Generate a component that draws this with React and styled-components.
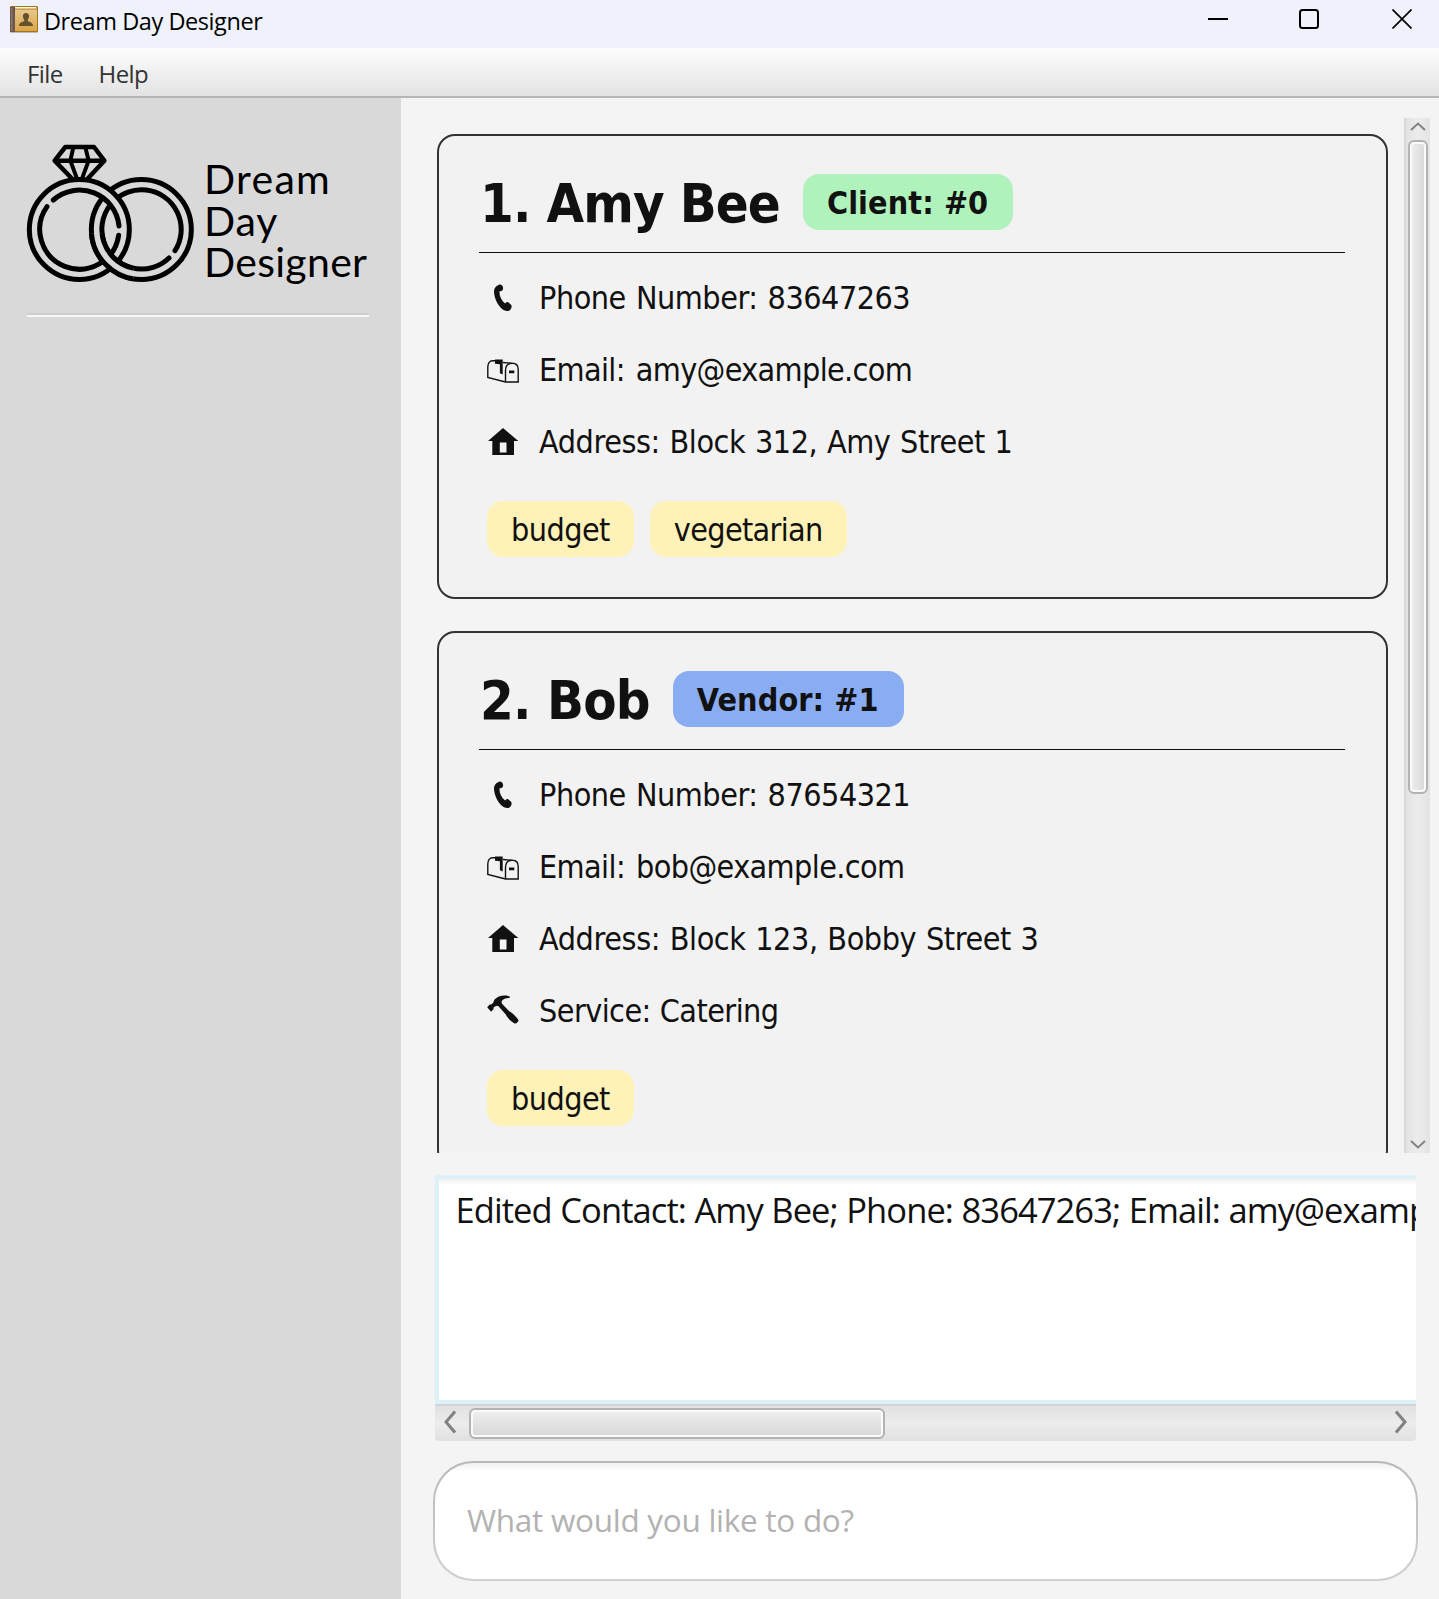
import React from "react";
import styled, { createGlobalStyle, css } from "styled-components";

const SEGOE = `"Segoe UI", "Open Sans", "Noto Sans", sans-serif`;
const TAHOMA = `Tahoma, "DejaVu Sans Condensed", "DejaVu Sans", sans-serif`;

const GlobalStyle = createGlobalStyle`
  *, *::before, *::after { box-sizing: border-box; }
  html, body { margin: 0; padding: 0; background: #f4f4f4; }
  svg { display: block; }
`;

const Window = styled.div`
  display: flex;
  flex-direction: column;
  width: 1439px;
  height: 1599px;
  overflow: hidden;
  background: #f4f4f4;
  font-family: ${SEGOE};
  color: #111;
`;

/* Title bar and menu */

const TitleBar = styled.header`
  display: flex;
  align-items: flex-start;
  height: 48px;
  flex: none;
  padding: 5px 27px 0 10px;
  background: #eff2fa;
`;

const WindowTitle = styled.div`
  margin: -4px 0 0 6px;
  font-size: 23.5px;
  line-height: 40px;
  letter-spacing: -0.43px;
  color: #000;
`;

const WindowControls = styled.div`
  display: grid;
  grid-template-columns: 91px 93px 20px;
  margin-left: auto;
  padding-top: 4px;
`;

const MenuBar = styled.nav`
  display: flex;
  flex: none;
  gap: 36px;
  height: 50px;
  padding: 1px 27px 0;
  border-bottom: 2px solid #b5b5b5;
  background: linear-gradient(#fdfdfd, #e3e3e3);
`;

const MenuItem = styled.span`
  font-size: 24px;
  line-height: 49px;
  letter-spacing: -0.6px;
  color: #333;
`;

/* Body */

const Body = styled.div`
  display: flex;
  flex: 1;
  min-height: 0;
`;

const Sidebar = styled.aside`
  width: 401px;
  flex: none;
  padding: 46px 30px 0 26px;
  background: #d9d9d9;
`;

const Brand = styled.div`
  display: flex;
  gap: 9px;
  height: 139px;
`;

const BrandName = styled.div`
  display: flex;
  flex-direction: column;
  padding-top: 14px;
  font: 400 41px/41.6px Lato, sans-serif;
  color: #000;
`;

const BrandWord = styled.span`
  letter-spacing: ${(p) => p.$spacing || 0}px;
`;

const SidebarRule = styled.div`
  height: 4px;
  width: 342px;
  margin: 30px 0 0 1px;
  border-top: 2px solid #cecece;
  background: #f8f8f8;
`;

const Main = styled.main`
  display: flex;
  flex-direction: column;
  flex: 1;
  min-width: 0;
  padding-top: 20px;
`;

const ListPanel = styled.section`
  display: flex;
  justify-content: space-between;
  flex: none;
  height: 1035px;
  padding: 0 9px 0 36px;
  overflow: hidden;
`;

const CardList = styled.div`
  display: flex;
  flex-direction: column;
  gap: 32px;
  width: 951px;
  padding-top: 16px;
`;

const Card = styled.article`
  flex: none;
  padding: 38px 41px 40px 40px;
  border: 2px solid #333;
  border-radius: 18px;
  background: #f2f2f2;
  font-family: ${TAHOMA};
`;

const CardHeader = styled.div`
  display: flex;
  align-items: flex-start;
  gap: 23px;
  height: 79px;
  border-bottom: 1px solid #111;
`;

const Name = styled.h2`
  margin: 0;
  padding: 2px 0 0 1px;
  font-size: 54px;
  font-weight: 700;
  line-height: 56px;
  letter-spacing: ${(p) => p.$spacing}px;
  white-space: nowrap;
`;

const chip = css`
  height: 56px;
  padding: 2px 24px 0;
  border-radius: 16px;
  font-size: 32px;
  line-height: 54px;
  white-space: nowrap;
`;

const Role = styled.span`
  ${chip}
  padding-right: 25px;
  font-weight: 700;
  letter-spacing: 0.1px;
  background: ${(p) => (p.$kind === "Vendor" ? "#8aacf2" : "#b0f2bb")};
`;

const Details = styled.div`
  display: flex;
  flex-direction: column;
  gap: 36px;
  padding: 27px 0 0 8px;
`;

const Detail = styled.div`
  display: flex;
  align-items: center;
  gap: 20px;
  height: 36px;
  font-size: 32px;
  line-height: 36px;
  letter-spacing: ${(p) => p.$spacing}px;
  word-spacing: ${(p) => p.$gap}px;
  white-space: nowrap;
`;

const Tags = styled.div`
  display: flex;
  gap: 16px;
  padding: 41px 0 0 8px;
`;

const Tag = styled.span`
  ${chip}
  letter-spacing: ${(p) => p.$spacing}px;
  background: #fff2b8;
`;

/* Scroll bars */

const VerticalScroll = styled.div`
  display: flex;
  flex-direction: column;
  align-items: center;
  width: 26px;
  height: 1035px;
  padding: 4px 0;
  border-left: 2px solid #d8d8d8;
  background: linear-gradient(90deg, #e3e3e3, #ececec 50%, #e3e3e3);
`;

const thumb = css`
  border: 2px solid #b3b3b3;
  border-radius: 6px;
  box-shadow: inset 0 0 0 2px #fafafa;
`;

const VerticalThumb = styled.div`
  ${thumb}
  width: 20px;
  height: 654px;
  margin: 9px 0 auto;
  background: linear-gradient(90deg, #f0f0f0, #d8d8d8);
`;

const HorizontalScroll = styled.div`
  display: flex;
  align-items: center;
  flex: none;
  width: 981px;
  height: 37px;
  margin-left: 34px;
  padding: 0 9px;
  border-top: 2px solid #d5d5d5;
  border-radius: 0 0 4px 4px;
  background: linear-gradient(#e1e1e1, #ececec 50%, #e1e1e1);

  > svg { margin-bottom: 3px; }
`;

const HorizontalThumb = styled.div`
  ${thumb}
  width: 416px;
  height: 31px;
  margin: 0 auto 0 13px;
  background: linear-gradient(#f0f0f0, #d6d6d6);
`;

/* Result and command */

const Result = styled.div`
  flex: none;
  width: 981px;
  height: 229px;
  margin: 22px 0 0 34px;
  padding: 7px 0 0 16.5px;
  overflow: hidden;
  border: 4px solid #ddf1f9;
  border-right: 0;
  border-radius: 3px 0 0 0;
  background: linear-gradient(#f1f1f1, #fff 6px);
  font-size: 34.5px;
  line-height: 48px;
  letter-spacing: -0.92px;
  word-spacing: 0.5px;
  white-space: nowrap;
`;

const Command = styled.input`
  flex: none;
  width: 985px;
  height: 120px;
  margin: 20px 0 0 32px;
  padding: 0 32px 4px;
  border: 2px solid transparent;
  border-radius: 40px;
  outline: 0;
  background:
    linear-gradient(#f1f1f1, #fff 9px) padding-box,
    linear-gradient(#b9b9b9, #d0d0d0) border-box;
  font-family: ${SEGOE};
  font-size: 31.5px;
  letter-spacing: -0.28px;
  color: #111;
  &::placeholder { color: #b2b2b2; opacity: 1; }
`;

const BookIcon = () => (
  <svg width="28" height="28" viewBox="0 0 28 28">
    <defs>
      <linearGradient id="cover" x1="0" y1="0" x2="0" y2="1">
        <stop offset="0" stopColor="#e9c88d" />
        <stop offset="1" stopColor="#dba548" />
      </linearGradient>
    </defs>
    <rect x="0" y="25" width="28" height="3" rx="1" fill="#b9b9bd" />
    <rect x="0" y="1" width="28" height="26" rx="1" fill="#a57519" />
    <rect x="1.5" y="2" width="25" height="1.6" fill="#fff3d8" />
    <rect x="5" y="4.5" width="22" height="21.5" fill="url(#cover)" />
    <rect x="0" y="2" width="5" height="25" fill="#6b5650" />
    <rect x="1" y="3" width="1.4" height="23" fill="#8b7770" />
    <path d="M16 8c2 0 3.2 1.4 3.1 3.4-.1 1.600-.9 2.500-1.300 3.100v1.700c2 .7 5.200 1.300 5.200 4.800H9c0-3.500 3.200-4.100 5.200-4.800v-1.700c-.4-.6-1.200-1.500-1.300-3.100C12.800 9.400 14 8 16 8z" fill="#65502f" />
  </svg>
);

const MinimizeIcon = () => (
  <svg width="20" height="20" viewBox="0 0 20 20"><path d="M0 10h20" stroke="#000" strokeWidth="2" /></svg>
);
const MaximizeIcon = () => (
  <svg width="20" height="20" viewBox="0 0 20 20"><rect x="1" y="1" width="18" height="18" rx="2.5" fill="none" stroke="#000" strokeWidth="2" /></svg>
);
const CloseIcon = () => (
  <svg width="20" height="20" viewBox="0 0 20 20"><path d="M.5.5l19 19M19.500.5l-19 19" stroke="#000" strokeWidth="1.700" /></svg>
);

const RightRing = () => (
  <g fill="none" stroke="#000" strokeWidth="15" strokeLinecap="round">
    <circle cx="394" cy="298.500" r="150" />
    <path d="M477 384A119 119 0 1 1 495 362" />
  </g>
);

const RingsLogo = () => (
  <svg width="169" height="139" viewBox="48 42 507 417">
    <defs>
      <clipPath id="lowerCrossing"><rect x="230" y="310" width="140" height="150" /></clipPath>
    </defs>
    <RightRing />
    <circle cx="208" cy="298.500" r="134.500" fill="none" stroke="#d9d9d9" strokeWidth="31" />
    <g fill="none" stroke="#000" strokeWidth="15" strokeLinecap="round">
      <circle cx="208" cy="298.500" r="150" />
      <path d="M130 210A119 119 0 0 1 327 288M326 316A119 119 0 1 1 111 230" />
    </g>
    <g clipPath="url(#lowerCrossing)">
      <circle cx="394" cy="298.500" r="134.500" fill="none" stroke="#d9d9d9" strokeWidth="31" />
      <RightRing />
    </g>
    <g fill="none" stroke="#000" strokeWidth="13.500" strokeLinecap="round" strokeLinejoin="round">
      <path d="M187 147L134 92l32-41h86l31 41-51 55M134 92h149" />
      <path strokeWidth="12" d="M190 52l-9 40 20 54M226 52l10 40-20 54" />
    </g>
  </svg>
);

const DetailIcon = ({ kind }) => (
  <svg width="32" height="36" viewBox="0 0 32 36" fill="#111">
    {kind === "phone" && (
      <path d="M11 5.300C13 3.600 15.500 4.800 16 7.300C16.500 10 14.800 11.500 12.600 11.200C12 15 14 20.500 18.200 23.600C19 22.300 20 21.700 21.200 22.300L24.300 25C25.200 27 24 29.600 22.500 30.500C20 31.800 16.500 30.500 14 28C10 24 7 17 7 11.500C7 9 8.500 6.300 11 5.300z" />
    )}
    {kind === "email" && (
      <g transform="translate(0 7)">
        <path d="M8 1.800H5.500C2.500 1.800.8 4.500.8 8v10.500L18.500 23h12.700V10.500c0-4-2.300-6.200-5.800-6.200-4 0-6.900 2.500-6.900 7.200V23M16 3.500l9.500.8" fill="none" stroke="#111" strokeWidth="1.400" />
        <path d="M8 .4h7.700v15.100l-2.800-1.300V5.300L8 4.800zM22 11.500h5.300v2.800H22z" />
      </g>
    )}
    {kind === "address" && (
      <path fillRule="evenodd" d="M16 4L31.300 17H27v14H5.300V17H1zM12.800 18.500v10h6.700v-10z" />
    )}
    {kind === "service" && (
      <path d="M7.500 6.500C10 3.500 15.500 1.800 19.500 2.600l3.200.9v1.600c-3.400-.2-6.200.6-8.200 3.400l.5 2.200 7 7.200c3 1.500 6.300 5 9.300 8.900.9 1.500-2.300 4.500-3.800 3.600-3.800-2.500-7.300-5.600-8.700-8.900L11 12.700l-2.600.6-2 1.500.2 1.300-2.500 2.700L.2 14.200l2.500-2.800 1.500.2 1.800-1.500z" />
    )}
  </svg>
);

const Chevron = ({ dir }) => {
  const shapes = {
    up: [16, 9, "M1 8l7-6.500L15 8"],
    down: [16, 9, "M1 1l7 6.500L15 1"],
    left: [12, 24, "M11 1.500L2 12l9 10.500"],
    right: [12, 24, "M1 1.500L10 12 1 22.500"],
  };
  const [w, h, d] = shapes[dir];
  return (
    <svg width={w} height={h} viewBox={`0 0 ${w} ${h}`} fill="none">
      <path d={d} stroke="#828282" strokeWidth={w > h ? 2 : 3} />
    </svg>
  );
};

const contacts = [
  {
    title: "1. Amy Bee", spacing: -0.9, kind: "Client", role: "Client: #0",
    details: [
      ["phone", "Phone Number: 83647263", -0.48, 1.5],
      ["email", "Email: amy@example.com", -0.64, 2.5],
      ["address", "Address: Block 312, Amy Street 1", -0.42, 0.9],
    ],
    tags: [["budget", -0.55], ["vegetarian", -0.65]],
  },
  {
    title: "2. Bob", spacing: -0.75, kind: "Vendor", role: "Vendor: #1",
    details: [
      ["phone", "Phone Number: 87654321", -0.48, 1.5],
      ["email", "Email: bob@example.com", -0.6, 2.5],
      ["address", "Address: Block 123, Bobby Street 3", -0.4, 0.9],
      ["service", "Service: Catering", -0.55, 0.5],
    ],
    tags: [["budget", -0.55]],
  },
];

const ContactCard = ({ contact }) => (
  <Card>
    <CardHeader>
      <Name $spacing={contact.spacing}>{contact.title}</Name>
      <Role $kind={contact.kind}>{contact.role}</Role>
    </CardHeader>
    <Details>
      {contact.details.map(([kind, text, spacing, gap]) => (
        <Detail key={kind} $spacing={spacing} $gap={gap}>
          <DetailIcon kind={kind} />
          <span>{text}</span>
        </Detail>
      ))}
    </Details>
    <Tags>
      {contact.tags.map(([text, spacing]) => (
        <Tag key={text} $spacing={spacing}>{text}</Tag>
      ))}
    </Tags>
  </Card>
);

export default function App() {
  return (
    <>
      <GlobalStyle />
      <Window>
        <TitleBar>
          <BookIcon />
          <WindowTitle>Dream Day Designer</WindowTitle>
          <WindowControls>
            <MinimizeIcon />
            <MaximizeIcon />
            <CloseIcon />
          </WindowControls>
        </TitleBar>
        <MenuBar>
          <MenuItem>File</MenuItem>
          <MenuItem>Help</MenuItem>
        </MenuBar>
        <Body>
          <Sidebar>
            <Brand>
              <RingsLogo />
              <BrandName>
                <BrandWord $spacing={1.3}>Dream</BrandWord>
                <BrandWord $spacing={0.8}>Day</BrandWord>
                <BrandWord $spacing={0.3}>Designer</BrandWord>
              </BrandName>
            </Brand>
            <SidebarRule />
          </Sidebar>
          <Main>
            <ListPanel>
              <CardList>
                {contacts.map((c) => <ContactCard key={c.title} contact={c} />)}
              </CardList>
              <VerticalScroll>
                <Chevron dir="up" />
                <VerticalThumb />
                <Chevron dir="down" />
              </VerticalScroll>
            </ListPanel>
            <Result>Edited Contact: Amy Bee; Phone: 83647263; Email: amy@example.com</Result>
            <HorizontalScroll>
              <Chevron dir="left" />
              <HorizontalThumb />
              <Chevron dir="right" />
            </HorizontalScroll>
            <Command placeholder="What would you like to do?" />
          </Main>
        </Body>
      </Window>
    </>
  );
}
